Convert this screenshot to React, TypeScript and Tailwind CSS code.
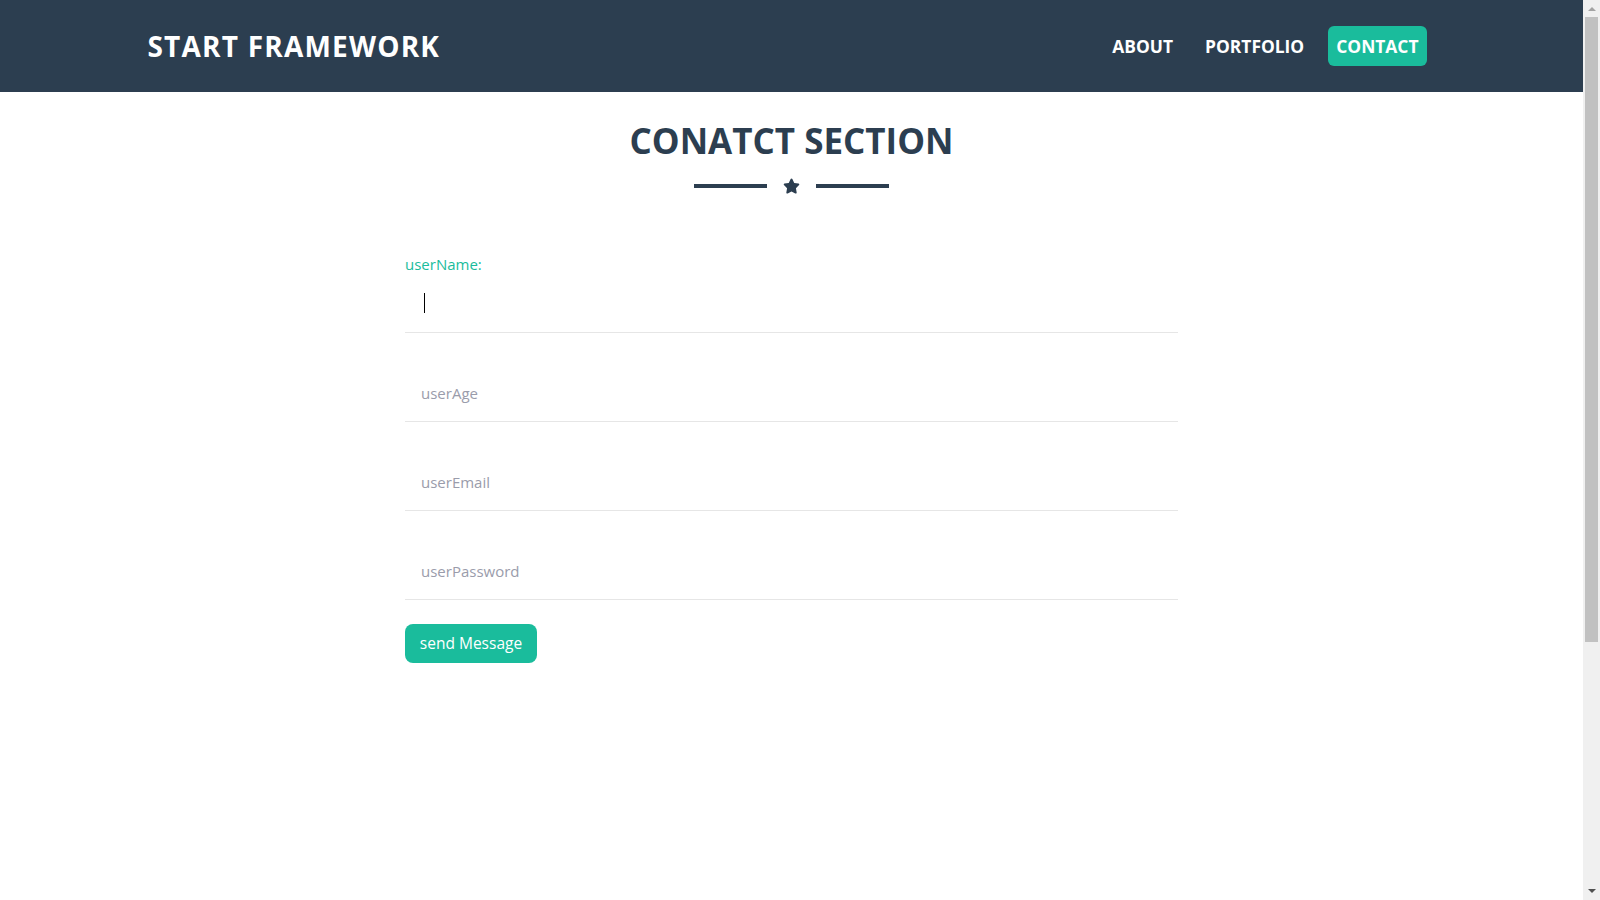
import React from "react"

const fields = [
  { name: "userName", label: "userName:", focused: true },
  { name: "userAge", label: "userAge:", focused: false },
  { name: "userEmail", label: "userEmail:", focused: false },
  { name: "userPassword", label: "userPassword:", focused: false },
]

function Star() {
  return (
    <svg viewBox="0 0 576 512" className="h-[16px] w-[17px] fill-[#2c3e50]">
      <path d="M316.9 18C311.6 7 300.4 0 288.1 0s-23.4 7-28.8 18L195 150.3 51.4 171.5c-12 1.8-22 10.2-25.7 21.7s-.7 24.2 7.9 32.7L137.8 329 113.2 474.7c-2 12 3 24.2 12.9 31.3s23 8 33.8 2.3l128.3-68.5 128.3 68.5c10.8 5.7 23.900 4.9 33.8-2.3s14.9-19.3 12.9-31.3L438.5 329 542.7 225.9c8.6-8.5 11.7-21.2 7.9-32.7s-13.7-19.9-25.7-21.7L381.2 150.3 316.9 18z" />
    </svg>
  )
}

function Field({ name, label, focused }: { name: string; label: string; focused: boolean }) {
  return (
    <div className="border-b border-[#e6e6e6] pt-[8px]">
      <label
        htmlFor={name}
        className={`block text-[15px] leading-6 text-[#1abc9c] ${focused ? "" : "invisible"}`}
      >
        {label}
      </label>
      <div className="relative">
        <input
          id={name}
          type="text"
          placeholder={focused ? "" : name}
          className="block w-full bg-transparent pl-4 pt-[16px] pb-[16px] text-[15px] leading-6 text-[#2c3e50] outline-none placeholder:text-[#9a9cab]"
        />
        {focused && <span className="pointer-events-none absolute left-[19px] top-[17px] h-5 w-px bg-black" />}
      </div>
    </div>
  )
}

export default function App() {
  return (
    <div className="flex h-screen overflow-hidden bg-white font-['Open_Sans',sans-serif]">
      <div className="flex-1">
        <nav className="h-[92px] bg-[#2c3e50]">
          <div className="mx-auto flex h-full max-w-[1320px] items-center justify-between px-3">
            <a href="#" className="ml-1 text-[28px] font-bold uppercase tracking-[1.2px] text-white">Start Framework</a>
            <ul className="mr-[13px] flex items-center gap-4 text-[17.4px] font-bold uppercase text-white">
              <li><a href="#" className="block rounded-md px-2 py-2 leading-6">About</a></li>
              <li><a href="#" className="block rounded-md px-2 py-2 leading-6">Portfolio</a></li>
              <li><a href="#" className="block rounded-md bg-[#1abc9c] px-2 py-2 leading-6">Contact</a></li>
            </ul>
          </div>
        </nav>

        <section className="pt-[27px]">
          <h2 className="text-center text-[35px] font-bold uppercase leading-[44px] text-[#2c3e50]">Conatct Section</h2>
          <div className="mt-[15px] flex items-center justify-center gap-4">
            <span className="h-1 w-[73px] bg-[#2c3e50]" />
            <Star />
            <span className="h-1 w-[73px] bg-[#2c3e50]" />
          </div>

          <form className="mx-auto mt-[50px] w-[773px]" onSubmit={(e) => e.preventDefault()}>
            {fields.map((f) => (
              <Field key={f.name} {...f} />
            ))}
            <button
              type="submit"
              className="mt-6 h-[39px] w-[132px] rounded-lg bg-[#1abc9c] pt-px text-[15.5px] text-white"
            >
              send Message
            </button>
          </form>
        </section>
      </div>

      {/* browser scrollbar */}
      <div className="flex w-[17px] flex-col items-center bg-[#f0f0f0]">
        <div className="mt-[7px] h-0 w-0 border-x-[4px] border-b-[4px] border-x-transparent border-b-[#a3a3a3]" />
        <div className="mt-[6px] h-[625px] w-[13px] bg-[#c1c1c1]" />
        <div className="flex-1" />
        <div className="mb-[7px] h-0 w-0 border-x-[4px] border-t-[4px] border-x-transparent border-t-[#505050]" />
      </div>
    </div>
  )
}
